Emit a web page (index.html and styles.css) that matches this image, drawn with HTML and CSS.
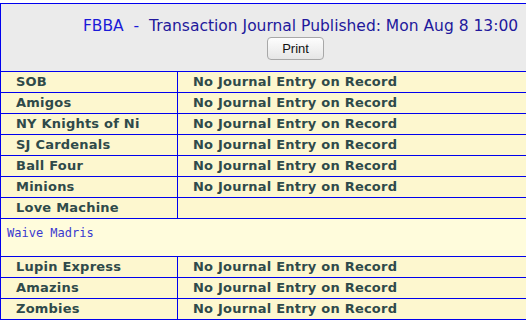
FILE: index.html
```html
<!DOCTYPE html>
<html>
<head>
<meta charset="utf-8">
<link rel="stylesheet" href="styles.css">
</head>
<body>
<table class="journal">
  <colgroup><col class="c1"><col class="c2"></colgroup>
  <tr class="head">
    <td colspan="2">
      <div class="title"><span class="org">FBBA&nbsp;&nbsp;-&nbsp;&nbsp;</span><span class="pub">Transaction Journal Published: Mon Aug 8 13:00</span></div>
      <button class="print">Print</button>
    </td>
  </tr>
  <tr><td class="team">SOB</td><td class="entry">No Journal Entry on Record</td></tr>
  <tr><td class="team">Amigos</td><td class="entry">No Journal Entry on Record</td></tr>
  <tr><td class="team">NY Knights of Ni</td><td class="entry">No Journal Entry on Record</td></tr>
  <tr><td class="team">SJ Cardenals</td><td class="entry">No Journal Entry on Record</td></tr>
  <tr><td class="team">Ball Four</td><td class="entry">No Journal Entry on Record</td></tr>
  <tr><td class="team">Minions</td><td class="entry">No Journal Entry on Record</td></tr>
  <tr><td class="team">Love Machine</td><td class="entry"></td></tr>
  <tr class="detail"><td colspan="2"><span class="move">Waive Madris</span></td></tr>
  <tr><td class="team">Lupin Express</td><td class="entry">No Journal Entry on Record</td></tr>
  <tr><td class="team">Amazins</td><td class="entry">No Journal Entry on Record</td></tr>
  <tr><td class="team">Zombies</td><td class="entry">No Journal Entry on Record</td></tr>
</table>
</body>
</html>
```
FILE: styles.css
```css
html, body {
  margin: 0;
  padding: 0;
  background: #ffffff;
}
body {
  padding-top: 3px;
}
.journal {
  border-collapse: collapse;
  width: 590px;
  table-layout: fixed;
  font-family: "DejaVu Sans", Verdana, sans-serif;
}
.c1 { width: 177px; }
.c2 { width: 413px; }
.journal td {
  border: 1px solid #0000ee;
  padding: 0;
  box-sizing: border-box;
}
.head td {
  background: #ebebeb;
  text-align: center;
  height: 68px;
  vertical-align: top;
}
.title {
  font-size: 15.5px;
  line-height: 20px;
  padding-top: 12px;
  padding-left: 10px;
  white-space: nowrap;
}
.org { color: #1a1ad8; }
.pub { color: #22189c; }
.print {
  margin-top: 1px;
  width: 57px;
  height: 23px;
  font-family: "Liberation Sans", Arial, sans-serif;
  font-size: 13px;
  color: #111;
  border: 1px solid #a8a8a8;
  border-radius: 4px;
  background: linear-gradient(#fdfdfd, #e6e6e6);
  padding: 0;
}
.team, .entry {
  background: #fdf7cf;
  color: #2f4a4a;
  font-weight: bold;
  font-size: 13px;
  letter-spacing: 0.22px;
  height: 21px;
  line-height: 20px;
  padding-left: 15px !important;
  white-space: nowrap;
  overflow: hidden;
}
.detail td {
  background: #fffcdc;
  height: 38px;
  vertical-align: top;
  padding: 3px 6px 0 !important;
}
.move {
  font-family: "DejaVu Sans Mono", monospace;
  font-size: 12px;
  color: #3a38d0;
}
```
